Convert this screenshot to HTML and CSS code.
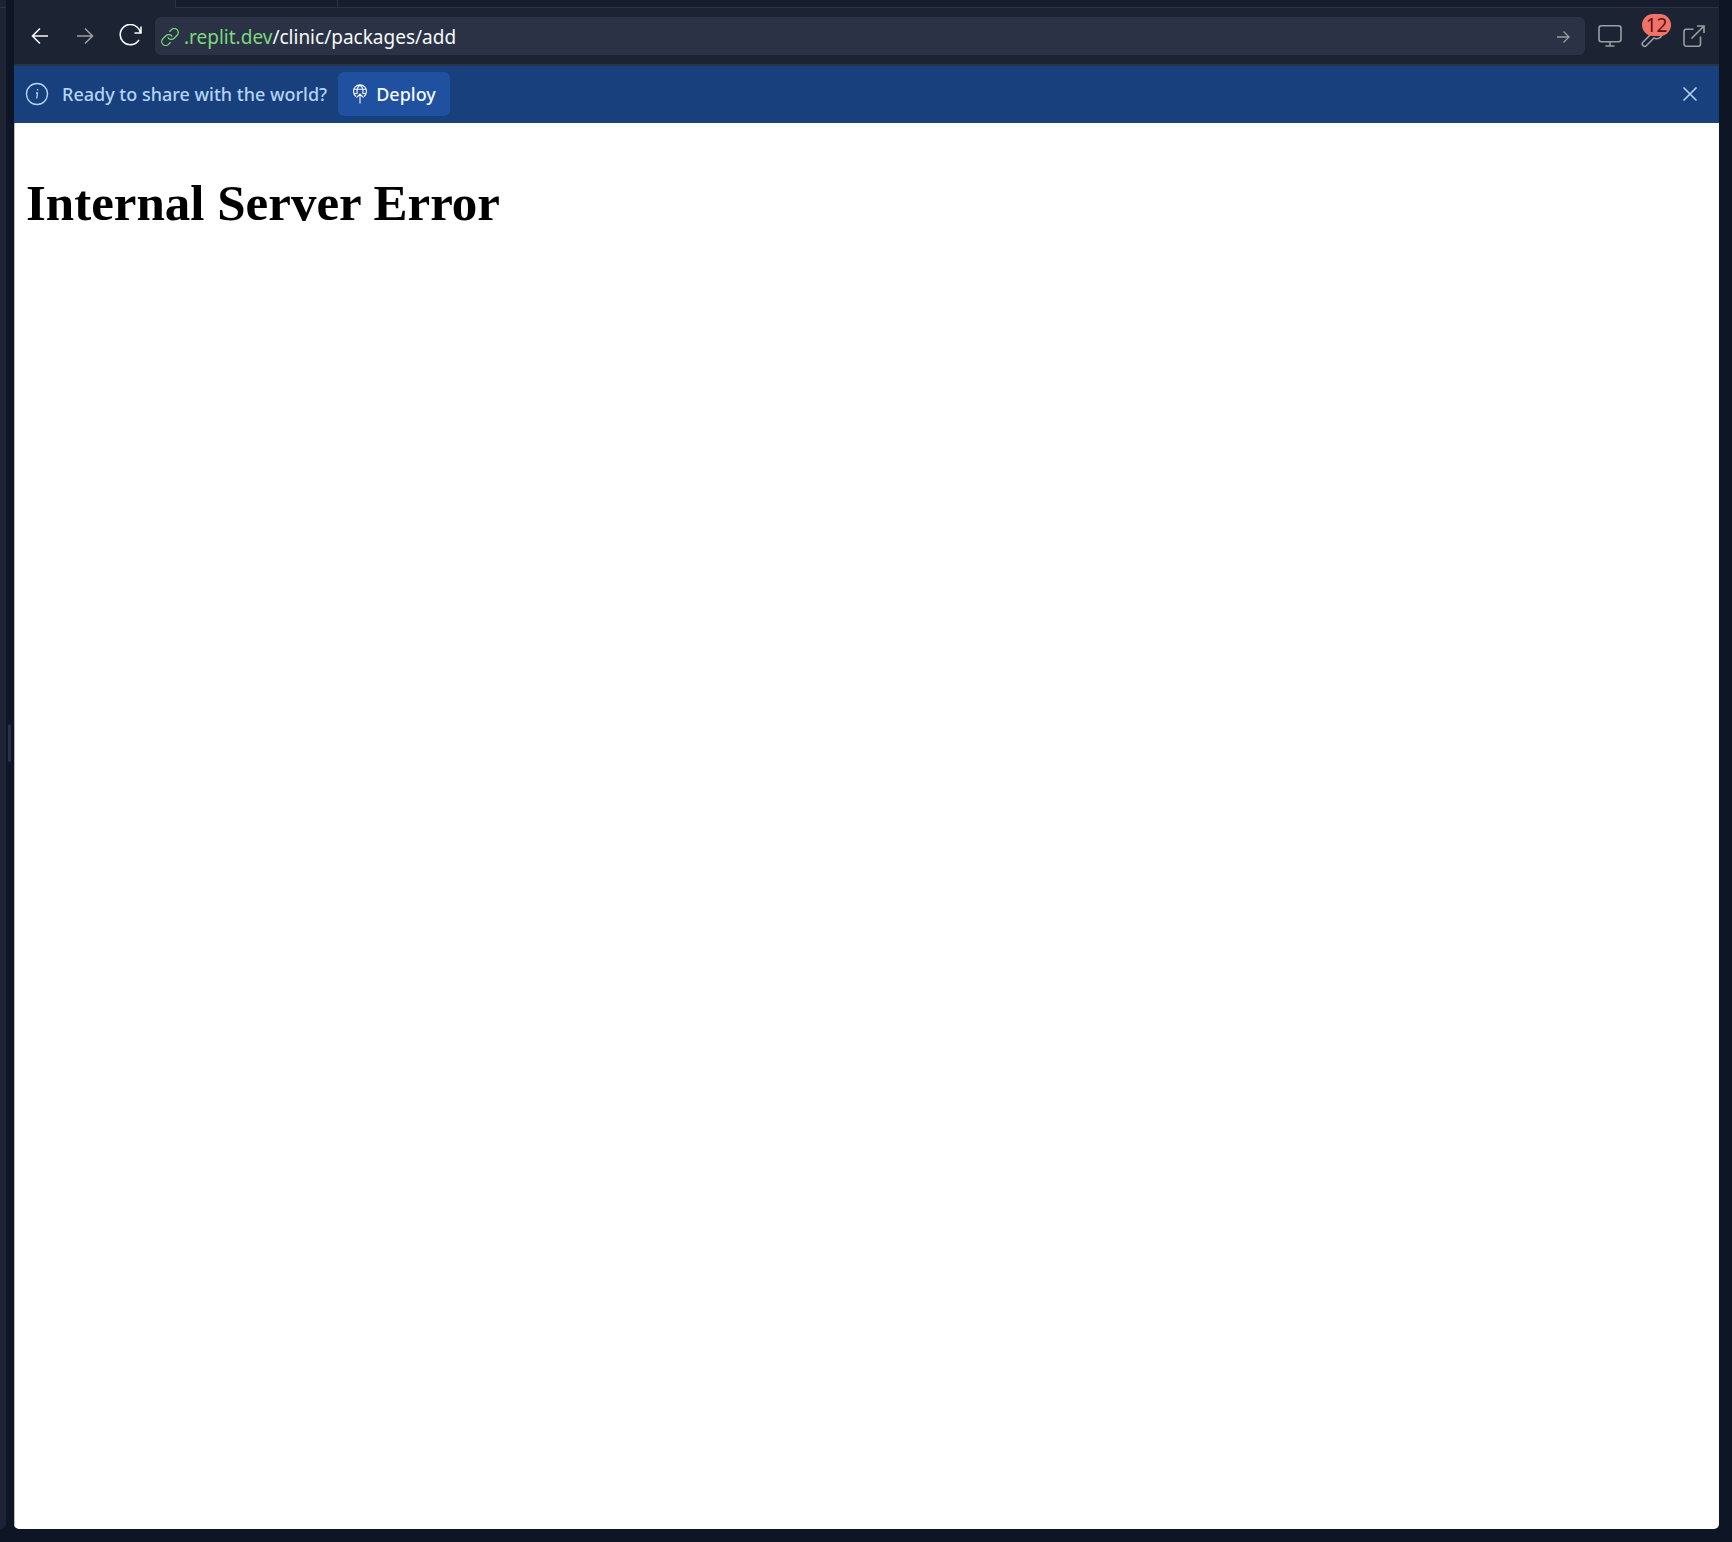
FILE: index.html
```html
<!DOCTYPE html>
<html lang="en">
<head>
  <meta charset="utf-8">
  <title>Webview</title>
  <link rel="stylesheet" href="styles.css">
</head>
<body>
  <div class="workspace">
    <aside class="side-pane"><div class="side-tabs"></div><div class="side-body"></div></aside>
    <div class="splitter"><div class="splitter-handle"></div></div>
    <main class="pane">
      <div class="tabs">
        <div class="tab tab-active"></div>
        <div class="tab"></div>
        <div class="tab-rest"></div>
      </div>
      <nav class="toolbar">
        <div class="nav-buttons">
          <button class="icon-button bright" type="button" aria-label="Back">
            <svg viewBox="0 0 24 24"><path d="M20 12H4.500M12 4.500L4.500 12l7.500 7.500"/></svg>
          </button>
          <button class="icon-button" type="button" aria-label="Forward">
            <svg viewBox="0 0 24 24"><path d="M4 12h15.500M12 4.500l7.500 7.500-7.500 7.500"/></svg>
          </button>
          <button class="icon-button bright" type="button" aria-label="Reload">
            <svg viewBox="0 0 24 24"><path d="M23 2.500v6.500h-6.500M22.300 9A10.100 10.100 0 1 0 21 15.800"/></svg>
          </button>
        </div>
        <form class="address">
          <svg class="link-icon" viewBox="0 0 24 24"><path d="M9 12.500a5.500 5.500 0 0 0 8.500 1.200l4-4a5.300 5.300 0 0 0-7.500-7.500l-2.700 2.700M15 11.500a5.500 5.500 0 0 0-8.500-1.200l-4 4a5.300 5.300 0 0 0 7.500 7.500l2.700-2.700"/></svg>
          <label class="host" for="path">.replit.dev</label>
          <input class="path" id="path" type="text" value="/clinic/packages/add" spellcheck="false">
          <button class="go" type="submit" aria-label="Go">
            <svg viewBox="0 0 16 16"><path d="M2 8h11.500M8.500 2.500L14 8l-5.500 5.500"/></svg>
          </button>
        </form>
        <div class="tools">
          <button class="icon-button" type="button" aria-label="Screen size">
            <svg viewBox="0 0 24 24"><rect x="1" y="1.700" width="22" height="16" rx="2.500"/><path d="M12 18v4M7.500 22h9"/></svg>
          </button>
          <button class="icon-button" type="button" aria-label="Developer tools, 12 messages">
            <svg viewBox="0 0 24 24"><path d="M19 3.500l-3.500 3.500 2 2L22 6a6 6 0 0 1-8 8l-7.500 7.500a2.200 2.200 0 0 1-3.600-3.200L10 11a6 6 0 0 1 9-7.500z"/></svg>
            <span class="count">12</span>
          </button>
          <button class="icon-button" type="button" aria-label="Open in new tab">
            <svg viewBox="0 0 24 24"><path d="M18.500 12.500V20a2.200 2.200 0 0 1-2.200 2.200H4.200A2.200 2.200 0 0 1 2 20V7.500a2.200 2.200 0 0 1 2.200-2.200h7.300M15 2h7v7M22 2L9.500 14.500"/></svg>
          </button>
        </div>
      </nav>
      <section class="banner">
        <svg class="info-icon" viewBox="0 0 24 24"><circle cx="12" cy="12" r="10.500"/><path d="M11 11h1.500l-.8 5.500M12.500 7v1.500"/></svg>
        <p class="banner-text">Ready to share with the world?</p>
        <button class="deploy" type="button">
          <svg viewBox="0 0 16 20"><path d="M4 12.500A6.500 6.500 0 1 1 12 12.500M2 5.200h12M2 9.500h3.500M10.500 9.500H14M5.300 9.500C4.400 6 5.500 3 8 1 10.500 3 11.600 6 10.700 9.500M8 19.500V10M4.500 13.500L8 10l3.500 3.500"/></svg>
          Deploy
        </button>
        <button class="dismiss" type="button" aria-label="Dismiss">
          <svg viewBox="0 0 16 16"><path d="M1.500 1.500l13 13M14.500 1.500l-13 13"/></svg>
        </button>
      </section>
      <article class="webview">
        <h1 class="error">Internal Server Error</h1>
      </article>
    </main>
  </div>
</body>
</html>
```
FILE: styles.css
```css
* {
  box-sizing: border-box;
}

body {
  margin: 0;
  background: #0e1525;
  color: #f5f9fc;
  font: 19px/24px "Noto Sans", "Liberation Sans", sans-serif;
}

button {
  padding: 0;
  border: 0;
  background: none;
  color: inherit;
  font: inherit;
}

svg {
  display: block;
  flex: none;
  fill: none;
  stroke: currentColor;
  stroke-width: 1.6;
}

.workspace {
  display: flex;
  min-height: 100vh;
  padding: 0 13px 13px 0;
}

.side-pane {
  display: flex;
  flex-direction: column;
  width: 6px;
}

.side-tabs {
  height: 8px;
  background: #1c2333;
  border-bottom: 1px solid #2b3245;
}

.side-body {
  flex: 1;
  background: #1c2333;
  border-radius: 0 0 6px 0;
}

.splitter {
  display: flex;
  align-items: center;
  width: 8px;
  padding-left: 2px;
}

.splitter-handle {
  width: 3px;
  height: 38px;
  margin-bottom: 44px;
  border-radius: 2px;
  background: #2b3245;
}

.pane {
  display: flex;
  flex: 1;
  flex-direction: column;
  min-width: 0;
  overflow: hidden;
  border-radius: 0 0 5px 5px;
  background: #1c2333;
}

.tabs {
  display: flex;
  height: 8px;
}

.tab,
.tab-rest {
  border-bottom: 1px solid #2b3245;
  background: #171d2d;
}

.tab {
  width: 162px;
  border-right: 1px solid #2b3245;
}

.tab-active {
  border-bottom-color: #1c2333;
  background: #1c2333;
}

.tab-rest {
  flex: 1;
}

.toolbar {
  display: flex;
  align-items: center;
  height: 58px;
  gap: 13px;
  padding: 0 13px 0 14px;
  border-bottom: 2px solid #2b3245;
}

.nav-buttons {
  display: flex;
  gap: 21px;
}

.tools {
  display: flex;
  gap: 18px;
}

.icon-button {
  position: relative;
  width: 24px;
  height: 24px;
  color: #9a9da3;
}

.icon-button svg {
  width: 24px;
  height: 24px;
}

.bright {
  color: #f5f9fc;
}

.address {
  display: flex;
  flex: 1;
  align-items: center;
  height: 38px;
  padding: 2px 14px 0 6px;
  border-radius: 6px;
  background: #2b3245;
}

.link-icon {
  width: 18px;
  height: 18px;
  margin-right: 5px;
  color: #7bd97c;
  stroke-width: 1.7;
}

.host {
  color: #7bd97c;
}

.path {
  flex: 1;
  min-width: 0;
  padding: 0;
  border: 0;
  outline: 0;
  background: none;
  color: #f5f9fc;
  font: inherit;
}

.go {
  color: #9a9da3;
}

.go svg {
  width: 16px;
  height: 16px;
  stroke-width: 1.3;
}

.count {
  position: absolute;
  top: -10px;
  left: 2px;
  width: 29px;
  border-radius: 11px;
  background: #f0736a;
  color: #5f0f0f;
  line-height: 22px;
  text-align: center;
}

.banner {
  display: flex;
  align-items: center;
  height: 57px;
  padding: 0 21px 1px 11px;
  background: #18407c;
  color: #b4d4fa;
  font-size: 18px;
  font-weight: 500;
}

.info-icon {
  width: 24px;
  height: 24px;
  stroke-width: 1.3;
}

.banner-text {
  margin: 0 11px 0 13px;
}

.deploy {
  display: flex;
  align-items: center;
  justify-content: center;
  gap: 8px;
  height: 44px;
  padding: 0 14px;
  border-radius: 6px;
  background: #2050a0;
  color: #f5f9fc;
}

.deploy svg {
  width: 16px;
  height: 20px;
  stroke-width: 1.1;
}

.dismiss {
  margin-left: auto;
}

.dismiss svg {
  width: 16px;
  height: 16px;
}

.webview {
  flex: 1;
  padding: 50px 11px;
  border-left: 1px solid #b9bbc4;
  background: #fff;
  color: #000;
}

.error {
  margin: 0;
  font: bold 51px/60px "Liberation Serif", serif;
}
```
